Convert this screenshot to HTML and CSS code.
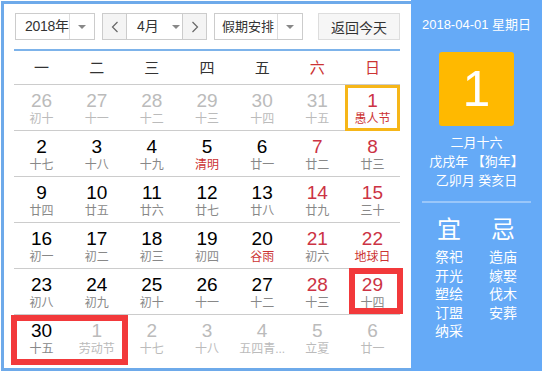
FILE: index.html
```html
<!DOCTYPE html>
<html lang="zh-CN">

<head>
	<meta charset="UTF-8">
	<meta name="viewport" content="width=device-width, initial-scale=1.0">
	<title>万年历</title>

	<link rel="stylesheet" href="styles.css">
</head>

<body>
	<div class="calendar">
		<div class="main">
			<div class="head">
				<div class="toolbar">
					<div class="select select--year">
						<span class="select__text">2018年</span>
						<span class="select__arrow"></span>
					</div>
					<div class="month">
						<span class="month__btn">
							<svg width="8" height="12" viewBox="0 0 8 12"><polyline points="6.5,1 1.5,6 6.5,11" fill="none" stroke="#666" stroke-width="1.2"/></svg>
						</span>
						<span class="month__value">4月<span class="caret"></span></span>
						<span class="month__btn">
							<svg width="8" height="12" viewBox="0 0 8 12"><polyline points="1.5,1 6.5,6 1.5,11" fill="none" stroke="#666" stroke-width="1.2"/></svg>
						</span>
					</div>
					<div class="select select--holiday">
						<span class="select__text">假期安排</span>
						<span class="select__arrow"></span>
					</div>
					<button class="today-btn" type="button">返回今天</button>
				</div>
			</div>

			<div class="grid">
				<div class="week">一</div>
				<div class="week">二</div>
				<div class="week">三</div>
				<div class="week">四</div>
				<div class="week">五</div>
				<div class="week week--end">六</div>
				<div class="week week--end">日</div>

				<div class="day day--other"><b>26</b><i>初十</i></div>
				<div class="day day--other"><b>27</b><i>十一</i></div>
				<div class="day day--other"><b>28</b><i>十二</i></div>
				<div class="day day--other"><b>29</b><i>十三</i></div>
				<div class="day day--other"><b>30</b><i>十四</i></div>
				<div class="day day--other"><b>31</b><i>十五</i></div>
				<div class="day day--end day--fest day--today"><b>1</b><i>愚人节</i></div>

				<div class="day"><b>2</b><i>十七</i></div>
				<div class="day"><b>3</b><i>十八</i></div>
				<div class="day"><b>4</b><i>十九</i></div>
				<div class="day day--fest"><b>5</b><i>清明</i></div>
				<div class="day"><b>6</b><i>廿一</i></div>
				<div class="day day--end"><b>7</b><i>廿二</i></div>
				<div class="day day--end"><b>8</b><i>廿三</i></div>

				<div class="day"><b>9</b><i>廿四</i></div>
				<div class="day"><b>10</b><i>廿五</i></div>
				<div class="day"><b>11</b><i>廿六</i></div>
				<div class="day"><b>12</b><i>廿七</i></div>
				<div class="day"><b>13</b><i>廿八</i></div>
				<div class="day day--end"><b>14</b><i>廿九</i></div>
				<div class="day day--end"><b>15</b><i>三十</i></div>

				<div class="day"><b>16</b><i>初一</i></div>
				<div class="day"><b>17</b><i>初二</i></div>
				<div class="day"><b>18</b><i>初三</i></div>
				<div class="day"><b>19</b><i>初四</i></div>
				<div class="day day--fest"><b>20</b><i>谷雨</i></div>
				<div class="day day--end"><b>21</b><i>初六</i></div>
				<div class="day day--end day--fest"><b>22</b><i>地球日</i></div>

				<div class="day"><b>23</b><i>初八</i></div>
				<div class="day"><b>24</b><i>初九</i></div>
				<div class="day"><b>25</b><i>初十</i></div>
				<div class="day"><b>26</b><i>十一</i></div>
				<div class="day"><b>27</b><i>十二</i></div>
				<div class="day day--end"><b>28</b><i>十三</i></div>
				<div class="day day--end"><b>29</b><i>十四</i></div>

				<div class="day day--last"><b>30</b><i>十五</i></div>
				<div class="day day--other day--last"><b>1</b><i>劳动节</i></div>
				<div class="day day--other day--last"><b>2</b><i>十七</i></div>
				<div class="day day--other day--last"><b>3</b><i>十八</i></div>
				<div class="day day--other day--last"><b>4</b><i>五四青...</i></div>
				<div class="day day--other day--last"><b>5</b><i>立夏</i></div>
				<div class="day day--other day--last"><b>6</b><i>廿一</i></div>

				<div class="mark mark--29"></div>
				<div class="mark mark--30"></div>
			</div>
		</div>

		<div class="side">
			<div class="side__date">2018-04-01 星期日</div>
			<div class="side__big">1</div>
			<div class="side__lunar">
				<div>二月十六</div>
				<div>戊戌年 【狗年】</div>
				<div>乙卯月 癸亥日</div>
			</div>
			<div class="side__line"></div>
			<div class="almanac">
				<div class="almanac__col">
					<div class="almanac__title">宜</div>
					<div>祭祀</div>
					<div>开光</div>
					<div>塑绘</div>
					<div>订盟</div>
					<div>纳采</div>
				</div>
				<div class="almanac__col">
					<div class="almanac__title">忌</div>
					<div>造庙</div>
					<div>嫁娶</div>
					<div>伐木</div>
					<div>安葬</div>
				</div>
			</div>
		</div>
	</div>
</body>

</html>
```

FILE: styles.css
```css
body {
	font-family: "Liberation Sans", "Noto Sans CJK SC", sans-serif;
	margin: 0;
	padding: 0;
	background-color: #fff;
}

.calendar {
	display: flex;
	width: 542px;
	height: 371px;
}

.main {
	width: 410px;
	height: 370px;
	margin: 1px 0 0 1px;
	padding: 9px 11px 0 10px;
	border: 3px solid #6eaaea;
	border-right: none;
	box-sizing: border-box;
}

.head {
	padding-bottom: 9px;
	border-bottom: 2px solid #7db3ea;
}

.toolbar {
	display: flex;
	align-items: center;
	height: 27px;
	padding-left: 1px;
	font-size: 14px;
	color: #333;
	white-space: nowrap;
}

.select {
	display: flex;
	height: 27px;
	border: 1px solid #ccc;
	box-sizing: border-box;
	background-color: #fff;
}

.select__text {
	flex: 1;
	line-height: 25px;
	padding-left: 9px;
	letter-spacing: -0.3px;
}

.select__arrow {
	width: 24px;
	flex-shrink: 0;
	display: flex;
	justify-content: center;
	align-items: center;
	border-left: 1px solid #ddd;
}

.select__arrow::after,
.caret::after {
	content: "";
	border-left: 4px solid transparent;
	border-right: 4px solid transparent;
	border-top: 4px solid #888;
}

.select--year {
	width: 80px;
}

.select--holiday {
	width: 89px;
	margin-left: 7px;
}

.select--holiday .select__text {
	padding-left: 7px;
	font-size: 13px;
	letter-spacing: 0;
}

.month {
	display: flex;
	width: 105px;
	height: 27px;
	margin-left: 7px;
	border: 1px solid #ccc;
	box-sizing: border-box;
}

.month__btn {
	width: 23px;
	display: flex;
	justify-content: center;
	align-items: center;
	background-color: #f4f4f4;
}

.month__value {
	flex: 1;
	display: flex;
	align-items: center;
	padding-left: 10px;
	line-height: 25px;
	border-left: 1px solid #ccc;
	border-right: 1px solid #ccc;
	background-color: #fff;
}

.caret {
	display: flex;
	margin-left: 13px;
}

.today-btn {
	width: 82px;
	height: 27px;
	margin-left: 15px;
	padding: 0;
	border: 1px solid #ddd;
	background-color: #f6f6f6;
	font-family: inherit;
	font-size: 14px;
	color: #333;
}

.grid {
	position: relative;
	display: grid;
	grid-template-columns: repeat(7, 1fr);
	width: 386px;
}

.week {
	height: 34px;
	line-height: 33px;
	box-sizing: border-box;
	border-bottom: 1px solid #ccc;
	text-align: center;
	font-size: 15px;
	color: #333;
}

.week--end {
	color: #cc3333;
}

.day {
	height: 46px;
	padding-top: 5px;
	box-sizing: border-box;
	border-bottom: 1px solid #ccc;
	text-align: center;
}

.day b {
	display: block;
	font-weight: normal;
	font-size: 19px;
	line-height: 21px;
	color: #000;
}

.day i {
	display: block;
	font-style: normal;
	font-size: 12px;
	line-height: 16px;
	color: #888;
}

.day--end b {
	color: #cc3344;
}

.day--fest i {
	color: #cc3333;
}

.day--other b,
.day--other i {
	color: #bbb;
}

.day--last {
	border-bottom: none;
}

.day--today {
	outline: 3px solid #f6b618;
	outline-offset: -3px;
}

.mark {
	position: absolute;
	border: 6px solid #f2393b;
	box-sizing: border-box;
}

.mark--29 {
	left: 335px;
	top: 217px;
	width: 54px;
	height: 46px;
}

.mark--30 {
	left: -3px;
	top: 264px;
	width: 117px;
	height: 50px;
}

.side {
	width: 131px;
	height: 371px;
	padding-top: 16px;
	box-sizing: border-box;
	background-color: #65aaf7;
	color: #fff;
	text-align: center;
}

.side__date {
	font-size: 13px;
	line-height: 18px;
}

.side__big {
	width: 75px;
	height: 74px;
	margin: 18px auto 0;
	border-radius: 3px;
	background-color: #ffb900;
	font-size: 50px;
	line-height: 74px;
}

.side__lunar {
	margin-top: 7px;
	font-size: 13px;
	line-height: 19px;
}

.side__line {
	margin: 11px 11px 0;
	border-top: 2px solid rgba(255, 255, 255, 0.35);
}

.almanac {
	display: grid;
	grid-template-columns: 54px 54px;
	padding-left: 11px;
	margin-top: 12px;
	font-size: 14px;
	line-height: 18.5px;
}

.almanac__title {
	font-size: 24px;
	line-height: 30px;
	margin-bottom: 3px;
}
```
